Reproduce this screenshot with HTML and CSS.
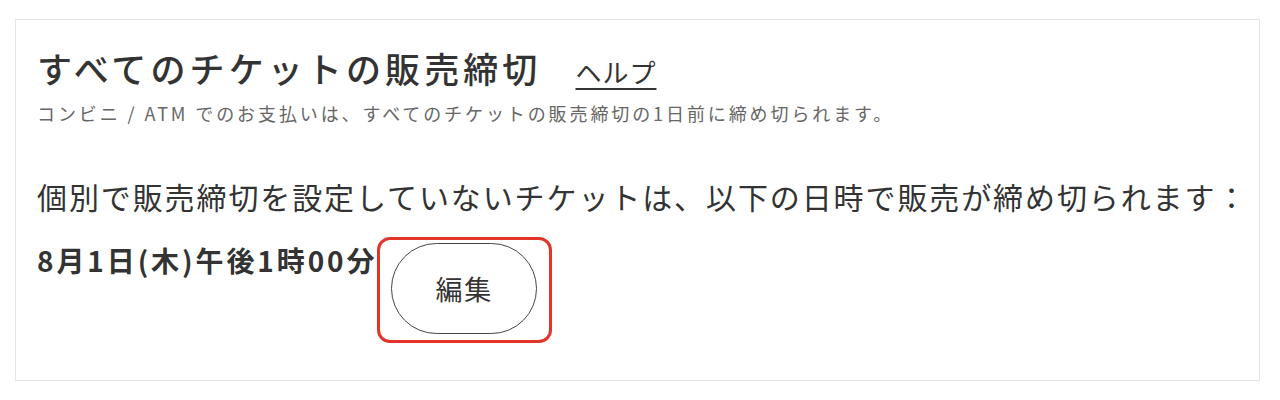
FILE: index.html
```html
<!DOCTYPE html>
<html lang="ja">
<head>
<meta charset="utf-8">
<link rel="stylesheet" href="styles.css">
</head>
<body>
<div class="page">
  <section class="card">
    <div class="head">
      <h1 class="title">すべてのチケットの販売締切</h1>
      <a class="help" href="#">ヘルプ</a>
    </div>
    <p class="note">コンビニ / ATM でのお支払いは、すべてのチケットの販売締切の1日前に締め切られます。</p>
    <p class="lead">個別で販売締切を設定していないチケットは、以下の日時で販売が締め切られます：</p>
    <div class="row">
      <span class="date">8月1日(木)午後1時00分</span>
      <div class="highlight">
        <button class="edit" type="button">編集</button>
      </div>
    </div>
  </section>
</div>
</body>
</html>
```

FILE: styles.css
```css
html, body {
  margin: 0;
  padding: 0;
  background: #ffffff;
}
body {
  font-family: "Noto Sans CJK JP", "Noto Sans", sans-serif;
  color: #333333;
}
.page {
  padding: 19px 20px 20px 15px;
}
.card {
  box-sizing: border-box;
  height: 362px;
  border: 1px solid #e4e4e4;
  padding: 26px 8px 0 21px;
}
.head {
  display: flex;
  align-items: baseline;
  gap: 34px;
}
.title {
  margin: 0;
  font-size: 35px;
  font-weight: 500;
  letter-spacing: 4.1px;
  line-height: 44px;
  color: #333333;
}
.help {
  font-size: 26px;
  color: #333333;
  text-decoration: underline;
  text-underline-offset: 5px;
  text-decoration-thickness: 2px;
  letter-spacing: 1px;
}
.note {
  margin: 11px 0 0;
  font-size: 18px;
  letter-spacing: 2.9px;
  line-height: 24px;
  color: #666666;
}
.lead {
  margin: 51px 0 0;
  font-size: 30px;
  letter-spacing: 1.9px;
  line-height: 40px;
  white-space: nowrap;
  color: #333333;
}
.row {
  display: flex;
  align-items: flex-start;
  margin-top: 21px;
  gap: 0;
}
.date {
  font-size: 28px;
  font-weight: 700;
  letter-spacing: 2.9px;
  line-height: 36px;
  margin-top: 5px;
}
.highlight {
  border: 3px solid #e3342a;
  border-radius: 13px;
  padding: 3px 12px 6px 11px;
}
.edit {
  display: block;
  width: 146px;
  height: 91px;
  border: 1.5px solid #444444;
  border-radius: 46px;
  background: #ffffff;
  font-family: inherit;
  font-size: 27px;
  color: #333333;
  letter-spacing: 2px;
}
```
